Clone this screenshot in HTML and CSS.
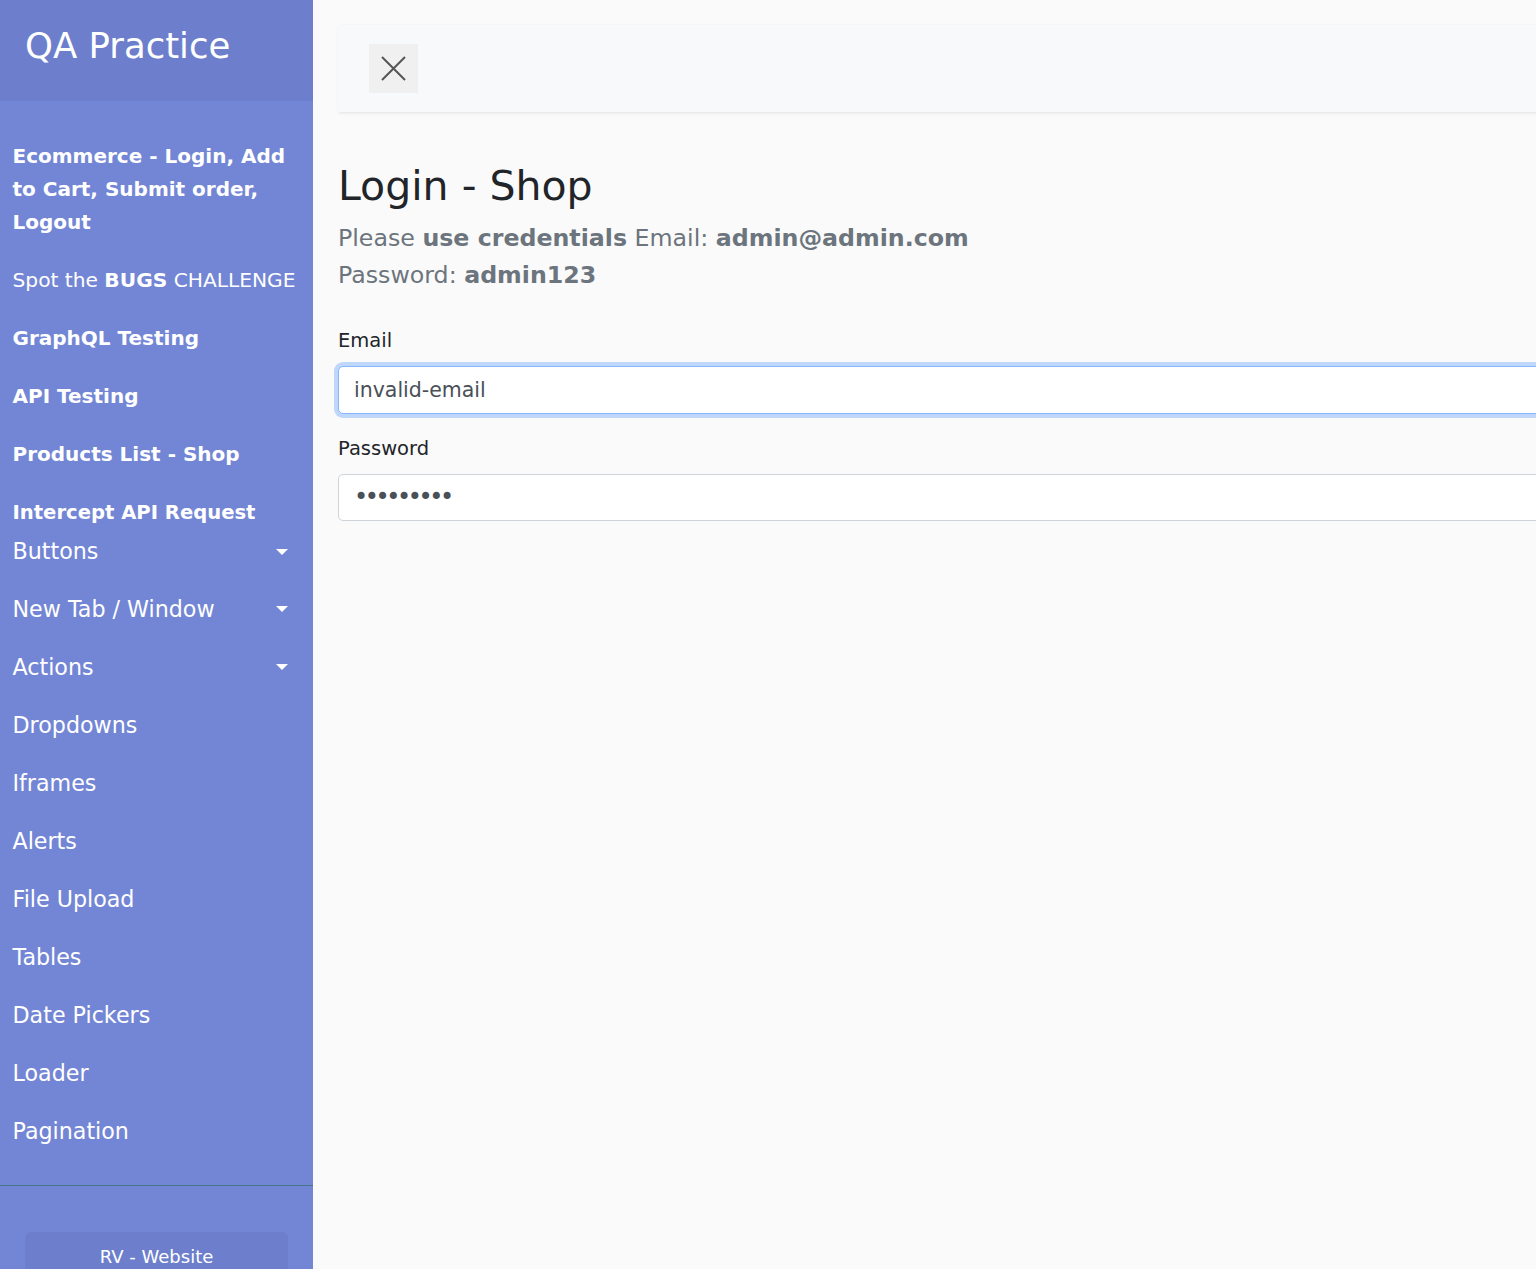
FILE: index.html
```html
<!DOCTYPE html>
<html lang="en">
<head>
<meta charset="utf-8">
<title>QA Practice - Login Shop</title>
<link rel="stylesheet" href="styles.css">
</head>
<body>
<div class="wrapper">
  <nav class="sidebar">
    <div class="sidebar-header">
      <h3 class="brand">QA Practice</h3>
    </div>
    <ul class="components">
      <li class="item item-bold"><a href="#"><b>Ecommerce - Login, Add to Cart, Submit order, Logout</b></a></li>
      <li class="item item-compact"><a href="#">Spot the <b>BUGS</b> CHALLENGE</a></li>
      <li class="item item-bold"><a href="#"><b>GraphQL Testing</b></a></li>
      <li class="item item-bold"><a href="#"><b>API Testing</b></a></li>
      <li class="item item-bold"><a href="#"><b>Products List - Shop</b></a></li>
      <li class="item item-bold item-tight-bottom"><a href="#"><b>Intercept API Request</b></a></li>
      <li class="item item-tight-top"><a href="#" class="toggle">Buttons</a></li>
      <li class="item"><a href="#" class="toggle">New Tab / Window</a></li>
      <li class="item"><a href="#" class="toggle">Actions</a></li>
      <li class="item"><a href="#">Dropdowns</a></li>
      <li class="item"><a href="#">Iframes</a></li>
      <li class="item"><a href="#">Alerts</a></li>
      <li class="item"><a href="#">File Upload</a></li>
      <li class="item"><a href="#">Tables</a></li>
      <li class="item"><a href="#">Date Pickers</a></li>
      <li class="item"><a href="#">Loader</a></li>
      <li class="item"><a href="#">Pagination</a></li>
    </ul>
    <ul class="ctas">
      <li><a href="#" class="cta">RV - Website</a></li>
    </ul>
  </nav>

  <main class="content">
    <div class="topbar">
      <button class="close-btn" type="button" aria-label="Close">
        <svg width="25" height="25" viewBox="0 0 25 25"><path d="M1 1 L24 24 M24 1 L1 24" stroke="#555" stroke-width="2" fill="none"/></svg>
      </button>
    </div>

    <h2 class="title">Login - Shop</h2>
    <p class="lead">Please <b>use credentials</b> Email: <b>admin@admin.com</b><br>Password: <b>admin123</b></p>

    <form class="login-form">
      <div class="field">
        <label class="label" for="email">Email</label>
        <input class="input is-focused" id="email" type="text" value="invalid-email">
      </div>
      <div class="field">
        <label class="label" for="password">Password</label>
        <input class="input input-secret" id="password" type="password" value="123456789">
      </div>
    </form>
  </main>
</div>
</body>
</html>
```

FILE: styles.css
```css
html, body {
  margin: 0;
  padding: 0;
  overflow: hidden;
}

body {
  font-family: "DejaVu Sans", "Open Sans", sans-serif;
  background: #fafafa;
  color: #212529;
}

.wrapper {
  display: flex;
  align-items: stretch;
  min-height: 100vh;
}

/* ---------- sidebar ---------- */
.sidebar {
  flex: 0 0 313px;
  width: 313px;
  min-height: 1269px;
  background: #7386d5;
  color: #fff;
}

.sidebar-header {
  background: #6d7fcc;
  padding: 25px;
  height: 51px;
}

.brand {
  margin: 0;
  font-size: 35.5px;
  line-height: 42px;
  font-weight: 400;
  color: #fff;
}

.components {
  list-style: none;
  margin: 0;
  padding: 26px 0 25px 0;
  border-bottom: 1px solid #47748b;
}

.item a {
  display: block;
  position: relative;
  padding: 12.5px 12.5px;
  font-size: 22.2px;
  line-height: 33px;
  color: #fff;
  text-decoration: none;
}

.item a b {
  font-weight: 700;
}

.item-bold a {
  font-size: 20px;
}

.item-compact a {
  white-space: nowrap;
  font-size: 20.2px;
}

.item-tight-bottom a {
  padding-bottom: 0;
  font-size: 19.6px;
}

.item-tight-top a {
  padding-top: 6px;
}

.toggle::after {
  content: "";
  position: absolute;
  right: 25px;
  top: 26px;
  border-top: 6px solid #fff;
  border-left: 6px solid transparent;
  border-right: 6px solid transparent;
}

.item-tight-top .toggle::after {
  top: 20px;
}

.ctas {
  list-style: none;
  margin: 0;
  padding: 46px 25px 25px 25px;
}

.cta {
  display: block;
  background: #6d7fcc;
  border-radius: 6px;
  padding: 12px 10px;
  text-align: center;
  font-size: 18px;
  line-height: 26px;
  color: #fff;
  text-decoration: none;
}

/* ---------- content ---------- */
.content {
  flex: 0 0 auto;
  width: 1400px;
  padding: 25px;
  background: #fafafa;
}

.topbar {
  background: #f8f9fa;
  box-shadow: 1px 1px 3px rgba(0, 0, 0, 0.1);
  padding: 19px 31px;
  margin-bottom: 50px;
  display: flex;
  align-items: center;
}

.close-btn {
  width: 49px;
  height: 49px;
  border: none;
  background: #f0f0f0;
  padding: 0;
  display: flex;
  align-items: center;
  justify-content: center;
}

.title {
  margin: 0 0 10px 0;
  font-size: 41px;
  line-height: 48px;
  font-weight: 400;
  color: #212529;
}

.lead {
  margin: 0 0 32px 0;
  font-size: 23.7px;
  line-height: 37px;
  color: #6c757d;
  font-weight: 400;
}

.lead b {
  font-weight: 700;
}

.field {
  margin-bottom: 20px;
}

.label {
  display: block;
  font-size: 19.5px;
  line-height: 30px;
  margin-bottom: 10px;
  color: #212529;
}

.input {
  display: block;
  box-sizing: border-box;
  width: 100%;
  height: 47.5px;
  padding: 0 15px;
  font-family: inherit;
  font-size: 20.5px;
  color: #495057;
  background: #fff;
  border: 1px solid #ced4da;
  border-radius: 5px;
  outline: none;
}

.input-secret {
  font-size: 24px;
  letter-spacing: -3.4px;
}

.input.is-focused {
  border-color: #86b7fe;
  box-shadow: 0 0 0 4px rgba(13, 110, 253, 0.25);
}
```
